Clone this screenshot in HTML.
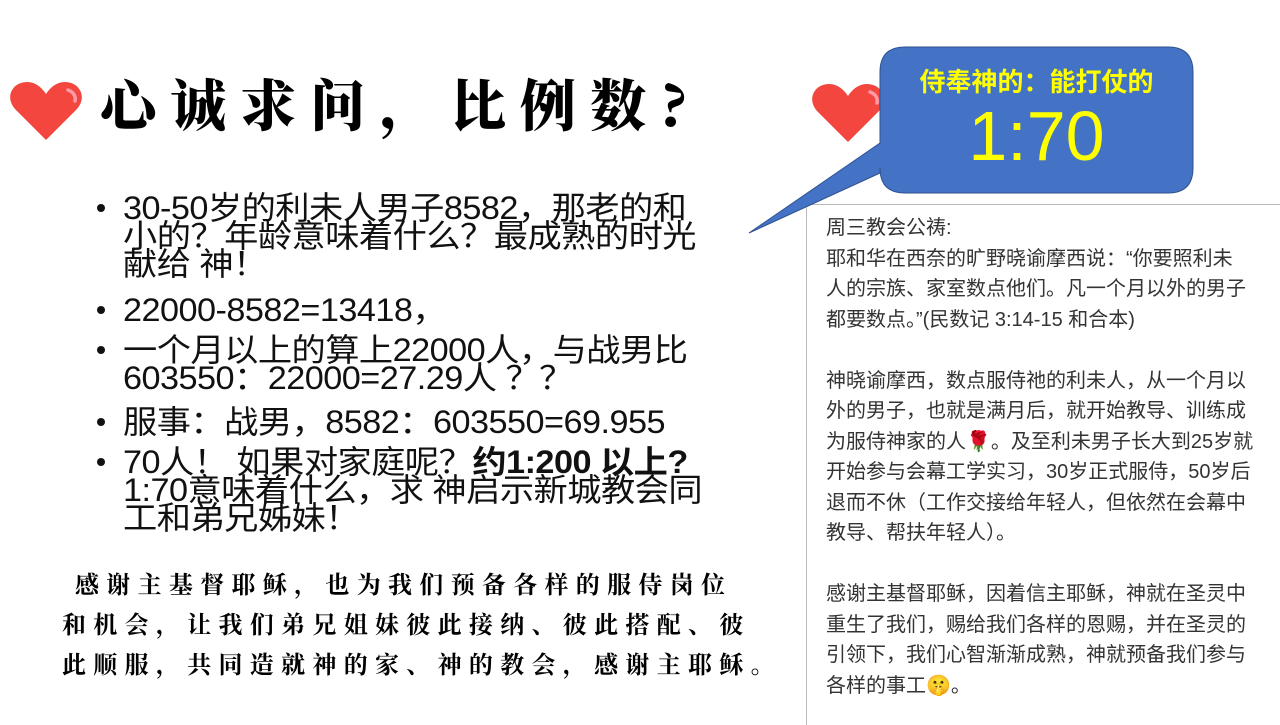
<!DOCTYPE html>
<html><head><meta charset="utf-8"><style>
body{margin:0;width:1280px;height:720px;background:#fff;position:relative;overflow:hidden;font-family:"Liberation Sans","Noto Sans CJK SC",sans-serif;}
.a{position:absolute;white-space:nowrap;}
.title{left:100px;top:68px;font-family:"Noto Serif CJK SC",serif;font-weight:900;font-size:56px;letter-spacing:14px;color:#000;line-height:70px;}
.b{font-size:32px;line-height:30px;color:#111;left:123px;letter-spacing:-0.5px;transform:scaleX(1.07);transform-origin:0 0;}
.dot{position:absolute;left:97px;width:8px;height:8px;border-radius:50%;background:#111;}
.p{font-family:"Noto Serif CJK SC",serif;font-weight:700;font-size:24px;letter-spacing:7.3px;color:#000;left:62px;line-height:40px;}
.r{left:826px;font-size:20px;color:#333;line-height:30.5px;}
</style></head><body>
<svg class="a" style="left:8px;top:80px" width="76" height="62" viewBox="0 0 76 62"><path d="M38 60 L8 30 C-4 18 4 2 19 2 C28 2 34 8 38 14 C42 8 48 2 57 2 C72 2 80 18 68 30 Z" fill="#f2463e"/><path d="M60 10 C66 12 68 17 67 21" stroke="#ff9aa8" stroke-width="3.5" fill="none" stroke-linecap="round"/></svg>
<div class="a title">心诚求问，比例数?</div>

<div class="dot" style="top:204px"></div>
<div class="a b" style="top:193px">30-50岁的利未人男子8582，那老的和</div>
<div class="a b" style="top:221px">小的？年龄意味着什么？最成熟的时光</div>
<div class="a b" style="top:249px">献给 神！</div>
<div class="dot" style="top:306px"></div>
<div class="a b" style="top:295px">22000-8582=13418，</div>
<div class="dot" style="top:346px"></div>
<div class="a b" style="top:335px">一个月以上的算上22000人，与战男比</div>
<div class="a b" style="top:363px">603550：22000=27.29人 ？？</div>
<div class="dot" style="top:418px"></div>
<div class="a b" style="top:407px">服事：战男，8582：603550=69.955</div>
<div class="dot" style="top:458px"></div>
<div class="a b" style="top:447px">70人！ 如果对家庭呢？<b>约1:200 以上?</b></div>
<div class="a b" style="top:475px">1:70意味着什么，求 神启示新城教会同</div>
<div class="a b" style="top:503px">工和弟兄姊妹！</div>

<div class="a p" style="top:563px;left:75px">感谢主基督耶稣，也为我们预备各样的服侍岗位</div>
<div class="a p" style="top:603px">和机会，让我们弟兄姐妹彼此接纳、彼此搭配、彼</div>
<div class="a p" style="top:643px">此顺服，共同造就神的家、神的教会，感谢主耶稣。</div>

<div class="a" style="left:806px;top:204px;width:480px;height:520px;border-left:1px solid #bbb;border-top:1px solid #bbb;"></div>
<div class="a r" style="top:213px">周三教会公祷:<br>耶和华在西奈的旷野晓谕摩西说：“你要照利未<br>人的宗族、家室数点他们。凡一个月以外的男子<br>都要数点。”(民数记 3:14-15 和合本)<br><br>神晓谕摩西，数点服侍祂的利未人，从一个月以<br>外的男子，也就是满月后，就开始教导、训练成<br>为服侍神家的人🌹。及至利未男子长大到25岁就<br>开始参与会幕工学实习，30岁正式服侍，50岁后<br>退而不休（工作交接给年轻人，但依然在会幕中<br>教导、帮扶年轻人）。<br><br>感谢主基督耶稣，因着信主耶稣，神就在圣灵中<br>重生了我们，赐给我们各样的恩赐，并在圣灵的<br>引领下，我们心智渐渐成熟，神就预备我们参与<br>各样的事工🤫。</div>

<svg class="a" style="left:810px;top:82px" width="76" height="62" viewBox="0 0 76 62"><path d="M38 60 L8 30 C-4 18 4 2 19 2 C28 2 34 8 38 14 C42 8 48 2 57 2 C72 2 80 18 68 30 Z" fill="#f2463e"/><path d="M60 10 C66 12 68 17 67 21" stroke="#ff9aa8" stroke-width="3.5" fill="none" stroke-linecap="round"/></svg>
<svg class="a" style="left:740px;top:40px" width="460" height="200" viewBox="740 40 460 200">
<path d="M905 47 H1168 Q1193 47 1193 72 V168 Q1193 193 1168 193 H905 Q880 193 880 168 V173 L749 233 L880 143 V72 Q880 47 905 47 Z" fill="#4472c4" stroke="#2f528f" stroke-width="1"/>
</svg>
<div class="a" style="left:880px;top:65px;width:313px;text-align:center;color:#ffff00;font-weight:700;font-size:26px;line-height:34px;">侍奉神的：能打仗的</div>
<div class="a" style="left:880px;top:98px;width:313px;text-align:center;color:#ffff00;font-size:70px;line-height:76px;">1:70</div>
</body></html>
